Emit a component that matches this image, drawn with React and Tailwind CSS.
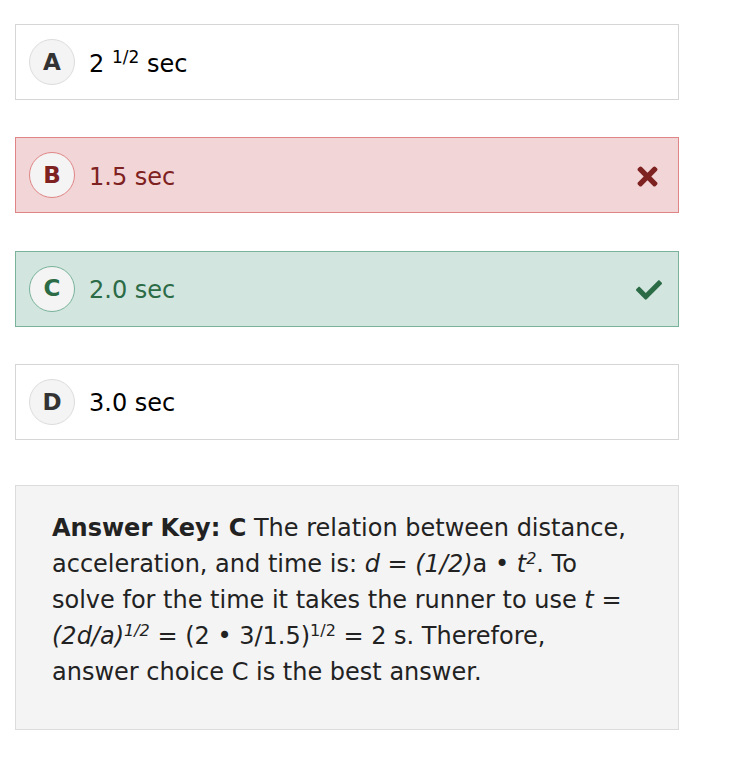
import { FaTimes, FaCheck } from "react-icons/fa"

const choices = [
    { letter: "A", text: <>2 <sup className="text-[17px]">1/2</sup> sec</>, state: "none" },
    { letter: "B", text: "1.5 sec", state: "wrong" },
    { letter: "C", text: "2.0 sec", state: "right" },
    { letter: "D", text: "3.0 sec", state: "none" },
]

const styles = {
    none: { card: "bg-white border-[#d6d6d6] text-black", circle: "border-[#dcdcdc] text-[#333]" },
    wrong: { card: "bg-[#f2d5d7] border-[#e08585] text-[#7e2121]", circle: "border-[#e08585] text-[#7e2121]" },
    right: { card: "bg-[#d3e5df] border-[#78b39a] text-[#2b6b46]", circle: "border-[#78b39a] text-[#2b6b46]" },
}

const Choice = ({ letter, text, state }) => {
    const s = styles[state]
    return (
        <div className={`flex items-center h-[76px] border pl-[13px] pr-[16px] ${s.card}`}>
            <div className={`w-[46px] h-[46px] rounded-full bg-[#f4f4f4] border flex items-center justify-center font-bold text-[23px] ${s.circle}`}>
                {letter}
            </div>
            <div className="ml-[14px] pt-[3px] text-[24px] flex-1">{text}</div>
            {state === "wrong" && <FaTimes className="text-[#7e2121] mt-[2px]" size={29} />}
            {state === "right" && <FaCheck className="text-[#2b6b46] mt-[2px]" size={26} />}
        </div>
    )
}

const App = () => {
    return (
        <div className="w-[738px] h-[784px] bg-white pl-[15px] pr-[59px] pt-[24px]" style={{ fontFamily: '"DejaVu Sans", Verdana, sans-serif' }}>
            <div className="flex flex-col gap-[37.33px]">
                {choices.map((c) => (
                    <Choice key={c.letter} {...c} />
                ))}
            </div>
            <div className="mt-[45px] h-[245px] bg-[#f4f4f4] border border-[#dcdcdc] pl-[36px] pr-[42px] pt-[24px] text-[24px] leading-[36px] text-[#222]">
                <b>Answer Key: C</b> The relation between distance, acceleration, and time is: <i>d</i> = <i>(1/2)</i>a • <i>t</i><sup className="text-[16px]"><i>2</i></sup>. To solve for the time it takes the runner to use <i>t</i> = <i>(2d/a)</i><sup className="text-[16px]"><i>1/2</i></sup> = (2 • 3/1.5)<sup className="text-[16px]">1/2</sup> = 2 s. Therefore, answer choice C is the best answer.
            </div>
        </div>
    )
}

export default App
